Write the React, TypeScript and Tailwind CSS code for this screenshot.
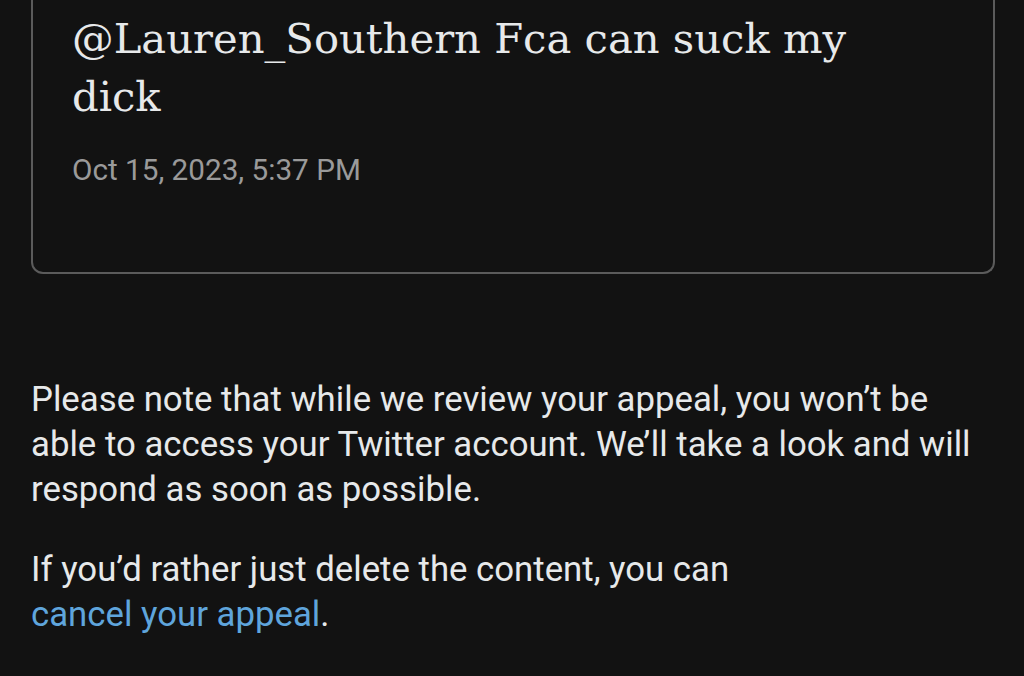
export default function App() {
  return (
    <div className="min-h-[676px] w-[1024px] overflow-hidden bg-[#121212] text-[#e7e9ea]">
      <div className="pl-[31px] pr-[29px]">
        <div className="-mt-[40px] rounded-b-[12px] border-2 border-t-0 border-[#5b5b5b] pb-[84px] pl-[39px] pr-[24px] pt-[50px]">
          <p className="max-w-[810px] font-['DejaVu_Serif',serif] text-[41.7px] leading-[58px] text-[#e7e9ea]">
            @Lauren_Southern Fca can suck my dick
          </p>
          <p className="mt-[26px] font-['Roboto',sans-serif] text-[29.7px] leading-[36px] text-[#9a9a9a]">
            Oct 15, 2023, 5:37 PM
          </p>
        </div>
        <div className="mt-[103px] font-['Roboto',sans-serif] text-[34.75px] leading-[45px]">
          <p>
            Please note that while we review your appeal, you won’t be able to
            access your Twitter account. We’ll take a look and will respond as
            soon as possible.
          </p>
          <p className="mt-[35px]">
            If you’d rather just delete the content, you can
            <br />
            <span className="text-[#5fa5dc]">cancel your appeal</span>.
          </p>
        </div>
      </div>
    </div>
  );
}
